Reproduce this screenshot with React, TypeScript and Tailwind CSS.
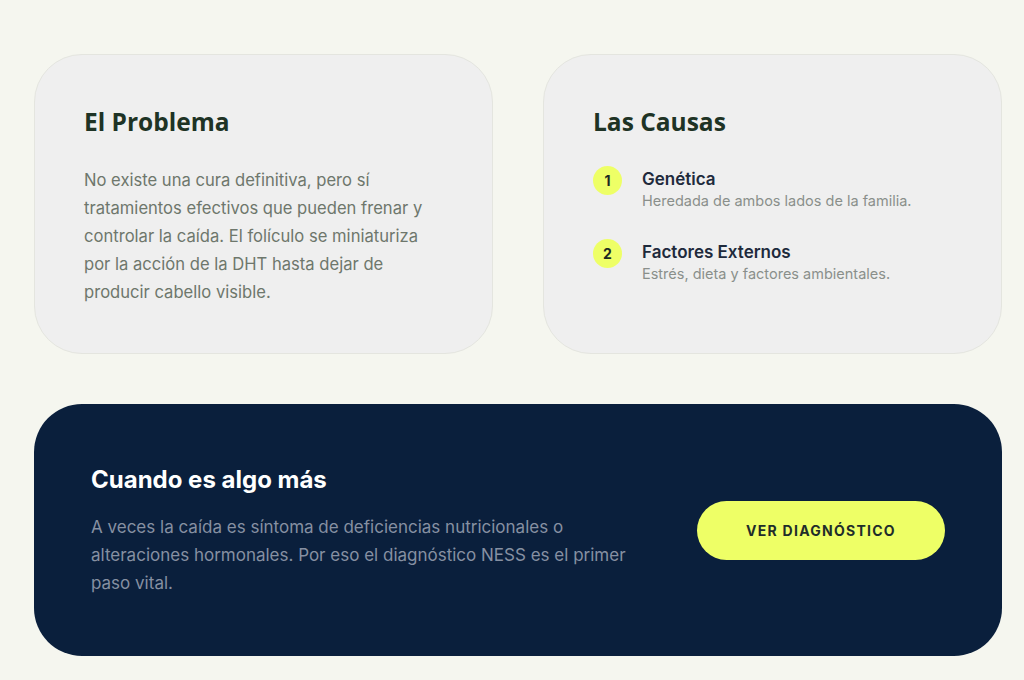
export default function App() {
  const causes = [
    { n: "1", title: "Genética", text: "Heredada de ambos lados de la familia." },
    { n: "2", title: "Factores Externos", text: "Estrés, dieta y factores ambientales." },
  ];
  const headingFont = { fontFamily: "'Open Sans', 'Noto Sans', sans-serif" };
  return (
    <div
      className="min-h-[680px] w-full bg-[#f5f6ef] pl-[34px] pt-[54px] pb-6"
      style={{ fontFamily: "Inter, 'Noto Sans', sans-serif" }}
    >
      <div className="w-[968px]">
        <div className="grid grid-cols-2 gap-[50px]">
          <section className="h-[300px] rounded-[48px] border border-[#e4e5df] bg-[#efefef] px-[49px] pt-[52px]">
            <h2 className="text-[24.5px] font-bold leading-[30px] text-[#1e3325]" style={headingFont}>
              El Problema
            </h2>
            <p className="mt-[29px] text-[16.6px] leading-[28px] text-[#6e776c]">
              No existe una cura definitiva, pero sí tratamientos efectivos que pueden frenar y
              controlar la caída. El folículo se miniaturiza por la acción de la DHT hasta dejar de
              producir cabello visible.
            </p>
          </section>
          <section className="h-[300px] rounded-[48px] border border-[#e4e5df] bg-[#efefef] px-[49px] pt-[52px]">
            <h2 className="text-[24.5px] font-bold leading-[30px] text-[#1e3325]" style={headingFont}>
              Las Causas
            </h2>
            <ul className="mt-[31px] flex flex-col gap-[30px]">
              {causes.map((c) => (
                <li key={c.n} className="flex items-start gap-[20px]">
                  <span className="mt-[-2px] flex h-[29px] w-[29px] shrink-0 items-center justify-center rounded-full bg-[#eeff66] text-[14px] font-bold text-[#1c2a22]">
                    {c.n}
                  </span>
                  <div>
                    <div className="text-[17px] font-semibold leading-[22px] text-[#1e2a3c]">
                      {c.title}
                    </div>
                    <div className="text-[14.5px] leading-[21px] text-[#8a8f8b]">{c.text}</div>
                  </div>
                </li>
              ))}
            </ul>
          </section>
        </div>
        <section className="mt-[50px] flex h-[252px] items-center justify-between rounded-[48px] bg-[#0a1f3c] px-[57px]">
          <div className="max-w-[545px]">
            <h2 className="text-[24px] font-bold leading-[32px] text-white">Cuando es algo más</h2>
            <p className="mt-[17px] text-[17px] leading-[28px] text-[#8690a2]">
              A veces la caída es síntoma de deficiencias nutricionales o alteraciones hormonales.
              Por eso el diagnóstico NESS es el primer paso vital.
            </p>
          </div>
          <button className="h-[59px] w-[248px] rounded-full bg-[#eeff66] text-[14px] font-bold tracking-[0.09em] text-[#1f2d2a]">
            VER DIAGNÓSTICO
          </button>
        </section>
      </div>
    </div>
  );
}
